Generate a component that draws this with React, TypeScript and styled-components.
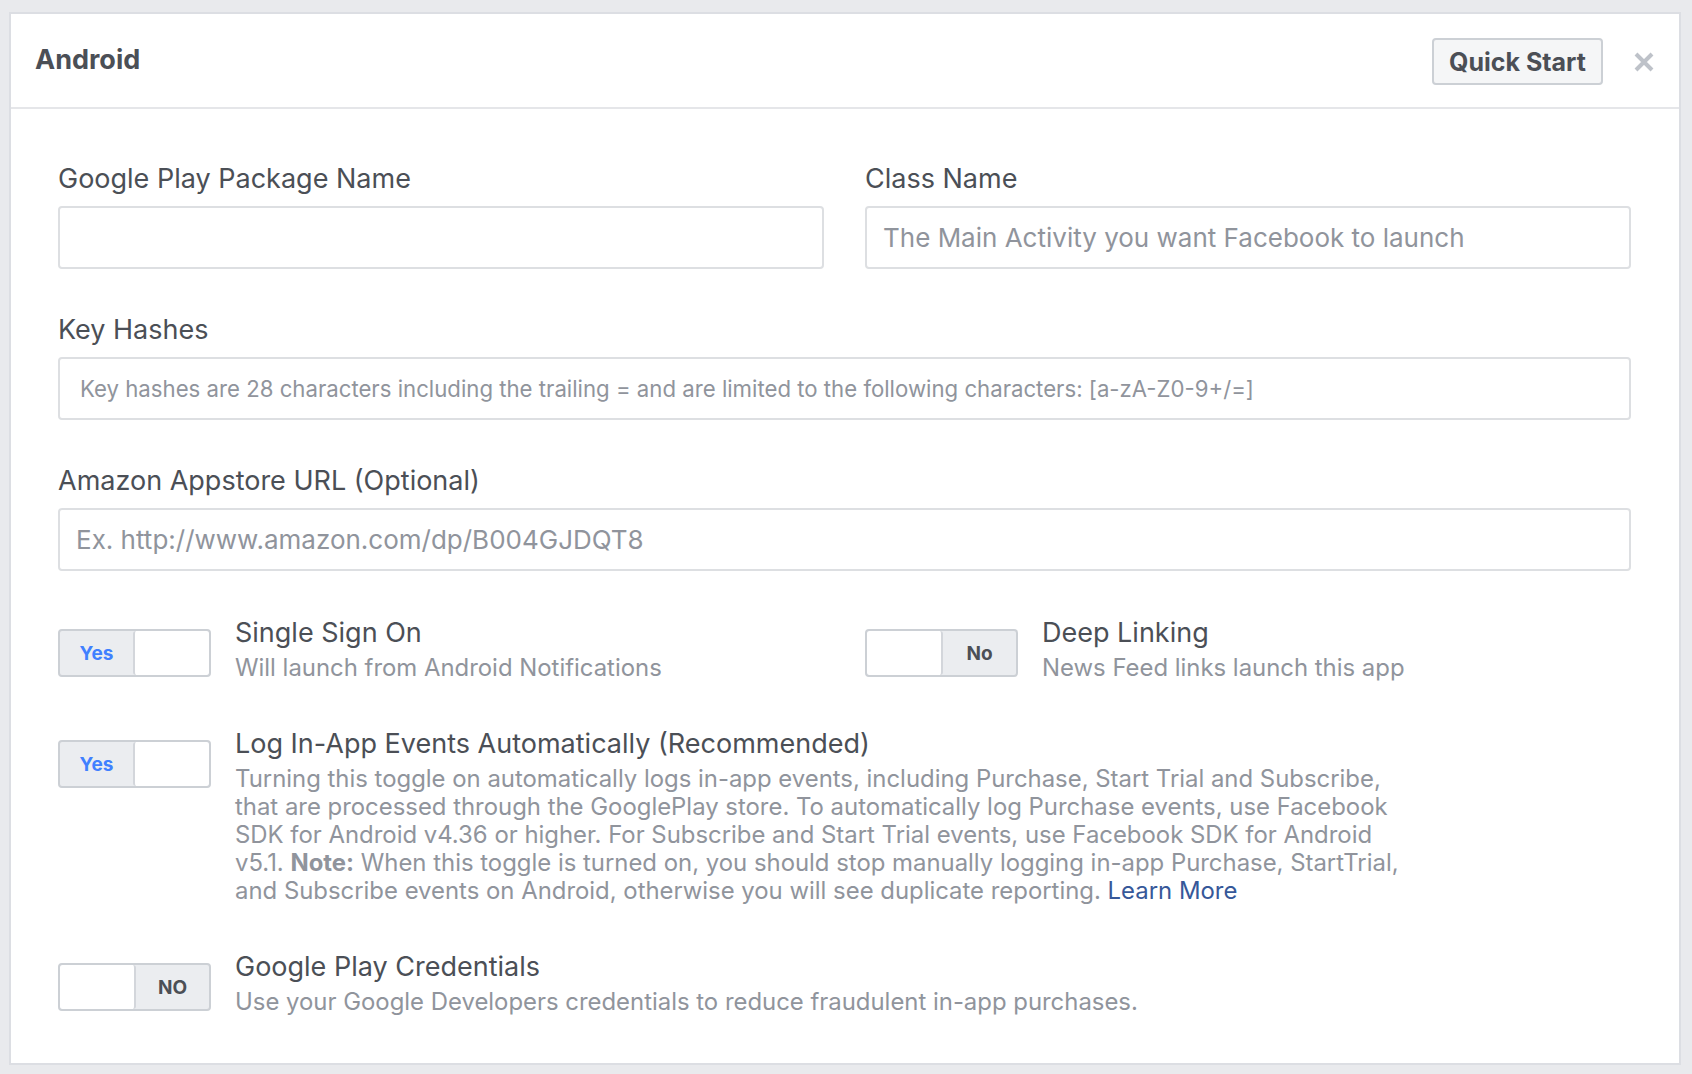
import { createGlobalStyle, styled } from 'styled-components';

const GlobalStyle = createGlobalStyle`
  html, body {
    margin: 0;
    padding: 0;
    background: #e9eaed;
  }
  body {
    font-family: Inter, "Liberation Sans", Arial, sans-serif;
    color: #4b4f56;
  }
  * {
    box-sizing: border-box;
  }
`;

type ToggleSetting = {
  on: boolean;
  label: string;
  title: string;
  description: React.ReactNode;
};

const CloseIcon = () => (
  <svg width="20" height="20" viewBox="0 0 20 20">
    <path d="M2 2 L18 18 M18 2 L2 18" stroke="#bec2c9" strokeWidth="4" />
  </svg>
);

const Toggle = ({ on, label }: { on: boolean; label: string }) => (
  <StyledToggle>
    {on ? (
      <>
        <StyledToggleLabel $on>{label}</StyledToggleLabel>
        <StyledToggleKnob $side="right" />
      </>
    ) : (
      <>
        <StyledToggleKnob $side="left" />
        <StyledToggleLabel>{label}</StyledToggleLabel>
      </>
    )}
  </StyledToggle>
);

const SettingRow = ({ on, label, title, description }: ToggleSetting) => (
  <StyledSettingRow>
    <Toggle on={on} label={label} />
    <StyledSettingText>
      <StyledSettingTitle>{title}</StyledSettingTitle>
      <StyledSettingDescription>{description}</StyledSettingDescription>
    </StyledSettingText>
  </StyledSettingRow>
);

export default function App() {
  return (
    <>
      <GlobalStyle />
      <StyledPage>
        <StyledCard>
          <StyledHeader>
            <StyledHeaderTitle>Android</StyledHeaderTitle>
            <StyledHeaderActions>
              <StyledQuickStart type="button">Quick Start</StyledQuickStart>
              <StyledCloseButton type="button" aria-label="Close">
                <CloseIcon />
              </StyledCloseButton>
            </StyledHeaderActions>
          </StyledHeader>

          <StyledBody>
            <StyledTwoColumns>
              <StyledField>
                <StyledLabel>Google Play Package Name</StyledLabel>
                <StyledInput type="text" />
              </StyledField>
              <StyledField>
                <StyledLabel>Class Name</StyledLabel>
                <StyledInput
                  type="text"
                  placeholder="The Main Activity you want Facebook to launch"
                />
              </StyledField>
            </StyledTwoColumns>

            <StyledField>
              <StyledLabel>Key Hashes</StyledLabel>
              <StyledInput
                type="text"
                $small
                placeholder="Key hashes are 28 characters including the trailing = and are limited to the following characters: [a-zA-Z0-9+/=]"
              />
            </StyledField>

            <StyledField>
              <StyledLabel>Amazon Appstore URL (Optional)</StyledLabel>
              <StyledInput
                type="text"
                placeholder="Ex. http://www.amazon.com/dp/B004GJDQT8"
              />
            </StyledField>

            <StyledTwoColumns>
              <SettingRow
                on
                label="Yes"
                title="Single Sign On"
                description="Will launch from Android Notifications"
              />
              <SettingRow
                on={false}
                label="No"
                title="Deep Linking"
                description="News Feed links launch this app"
              />
            </StyledTwoColumns>

            <SettingRow
              on
              label="Yes"
              title="Log In-App Events Automatically (Recommended)"
              description={
                <>
                  Turning this toggle on automatically logs in-app events,
                  including Purchase, Start Trial and Subscribe, that are
                  processed through the GooglePlay store. To automatically log
                  Purchase events, use Facebook SDK for Android v4.36 or
                  higher. For Subscribe and Start Trial events, use Facebook
                  SDK for Android v5.1. <strong>Note:</strong> When this toggle
                  is turned on, you should stop manually logging in-app
                  Purchase, StartTrial, and Subscribe events on Android,
                  otherwise you will see duplicate reporting.{' '}
                  <StyledLink href="#">Learn More</StyledLink>
                </>
              }
            />

            <SettingRow
              on={false}
              label="NO"
              title="Google Play Credentials"
              description="Use your Google Developers credentials to reduce fraudulent in-app purchases."
            />
          </StyledBody>
        </StyledCard>
      </StyledPage>
    </>
  );
}

const StyledPage = styled.div`
  padding: 12px 11px 10px 9px;
`;

const StyledCard = styled.div`
  background: #fff;
  border: 2px solid #dcdee3;
`;

const StyledHeader = styled.div`
  height: 95px;
  display: flex;
  align-items: center;
  justify-content: space-between;
  padding: 2px 25px 0 24px;
  border-bottom: 2px solid #e5e6e9;
`;

const StyledHeaderTitle = styled.h1`
  margin: 0 0 4px;
  font-size: 27px;
  font-weight: 700;
  color: #4b4f56;
`;

const StyledHeaderActions = styled.div`
  display: flex;
  align-items: center;
  gap: 31px;
`;

const StyledQuickStart = styled.button`
  height: 47px;
  width: 171px;
  padding: 0;
  background: #f5f6f7;
  border: 2px solid #ccd0d5;
  border-radius: 4px;
  font-family: inherit;
  font-size: 25px;
  font-weight: 700;
  color: #4b4f56;
`;

const StyledCloseButton = styled.button`
  display: flex;
  padding: 0;
  border: 0;
  background: none;
`;

const StyledBody = styled.div`
  padding: 55px 48px 47px 47px;
  display: flex;
  flex-direction: column;
  gap: 46px;
`;

const StyledTwoColumns = styled.div`
  display: grid;
  grid-template-columns: 1fr 1fr;
  column-gap: 41px;
`;

const StyledField = styled.div`
  display: flex;
  flex-direction: column;
`;

const StyledLabel = styled.label`
  font-size: 27px;
  line-height: 30px;
  color: #4b4f56;
  margin-bottom: 12px;
`;

const StyledInput = styled.input<{ $small?: boolean }>`
  height: 63px;
  width: 100%;
  padding: 0 ${(p) => (p.$small ? '20px' : '16px')};
  border: 2px solid #dddfe2;
  border-radius: 4px;
  font-family: inherit;
  font-size: ${(p) => (p.$small ? '22.2px' : '26px')};
  color: #1d2129;
  outline: none;

  &::placeholder {
    color: #90949c;
  }
`;

const StyledSettingRow = styled.div`
  display: flex;
  align-items: flex-start;
  gap: 24px;
`;

const StyledToggle = styled.div`
  flex: none;
  margin-top: 12px;
  width: 153px;
  height: 48px;
  display: flex;
  border: 2px solid #ccd0d5;
  border-radius: 4px;
  background: #ebedf0;
  overflow: hidden;
`;

const StyledToggleLabel = styled.span<{ $on?: boolean }>`
  flex: 1;
  display: flex;
  align-items: center;
  justify-content: center;
  font-size: 19px;
  font-weight: 700;
  color: ${(p) => (p.$on ? '#4080ff' : '#4b4f56')};
`;

const StyledToggleKnob = styled.span<{ $side: 'left' | 'right' }>`
  width: 76px;
  background: #fff;
  border-radius: 3px;
  ${(p) =>
    p.$side === 'right'
      ? 'border-left: 2px solid #d3d6db;'
      : 'border-right: 2px solid #d3d6db;'}
`;

const StyledSettingText = styled.div`
  max-width: 1180px;
`;

const StyledSettingTitle = styled.div`
  font-size: 27px;
  line-height: 32px;
  color: #4b4f56;
`;

const StyledSettingDescription = styled.div`
  margin-top: 5px;
  font-size: 23.9px;
  line-height: 28px;
  color: #90949c;

  strong {
    font-weight: 700;
  }
`;

const StyledLink = styled.a`
  color: #365899;
  text-decoration: none;
`;
